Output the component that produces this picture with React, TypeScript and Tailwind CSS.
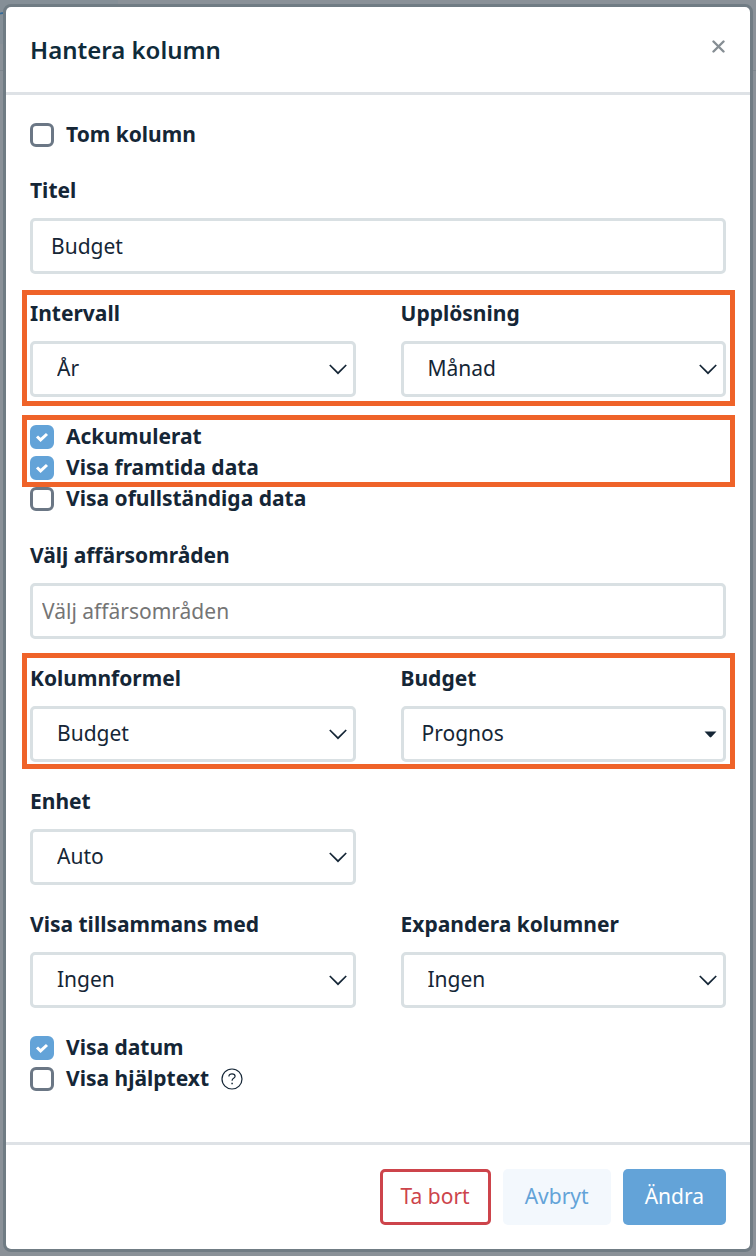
import { useState, type ReactNode } from 'react'
import clsx from 'clsx'

const CONTROL =
  'block w-full h-14 rounded-[5px] border-[3px] border-[#d9e0e3] bg-white text-[21px] text-[#152636] outline-none focus:border-[#63a3d8]'

export default function App() {
  return (
    <div className="relative min-h-screen bg-[#8a9198] px-[3px] pt-1 pb-1 font-['Noto_Sans',sans-serif] text-[#152636]">
      <Backdrop />
      <div
        role="dialog"
        aria-labelledby="dialog-title"
        className="relative rounded-lg border-[3px] border-[#707c84] bg-[#707c84]"
      >
        <div className="rounded-[5px] bg-white">
          <header className="flex h-[88px] items-center justify-between border-b-[3px] border-[#dee2e6] px-6">
            <h1 id="dialog-title" className="text-[24px] font-semibold text-[#0f2b3a]">
              Hantera kolumn
            </h1>
            <button type="button" aria-label="Stäng" className="mb-1.5 p-px text-[#868e94]">
              <svg width="13" height="13" viewBox="0 0 13 13" fill="none" stroke="currentColor" strokeWidth="2.4" strokeLinecap="round">
                <path d="M1.5 1.5 11.5 11.5M11.5 1.5 1.5 11.5" />
              </svg>
            </button>
          </header>

          <form className="flex flex-col gap-6 px-6 pt-6 pb-12" onSubmit={e => e.preventDefault()}>
            <div className="pb-px">
              <CheckRow label="Tom kolumn" />
            </div>

            <Field id="titel" label="Titel">
              <input id="titel" type="text" defaultValue="Budget" className={clsx(CONTROL, 'px-[18px]')} />
            </Field>

            <Row>
              <Highlight className="-top-2 -bottom-[9px]" />
              <SelectField id="intervall" label="Intervall" options={['År', 'Kvartal', 'Månad']} />
              <SelectField id="upplosning" label="Upplösning" options={['Månad', 'Kvartal', 'År']} />
            </Row>

            <div className="flex flex-col pb-0.5">
              <div className="relative flex flex-col">
                <Highlight className="-top-1.5 -bottom-1" />
                <CheckRow label="Ackumulerat" checked />
                <CheckRow label="Visa framtida data" checked />
              </div>
              <CheckRow label="Visa ofullständiga data" />
            </div>

            <Field id="affarsomraden" label="Välj affärsområden">
              <input
                id="affarsomraden"
                type="text"
                placeholder="Välj affärsområden"
                className={clsx(CONTROL, 'px-[9px] placeholder:text-[#757575]')}
              />
            </Field>

            <Row>
              <Highlight className="-top-2.5 -bottom-[7px]" />
              <SelectField id="kolumnformel" label="Kolumnformel" options={['Budget', 'Utfall']} />
              <SelectField id="budget" label="Budget" options={['Prognos', 'Budget']} caret />
            </Row>

            <Row>
              <SelectField id="enhet" label="Enhet" options={['Auto']} />
            </Row>

            <Row>
              <SelectField id="tillsammans" label="Visa tillsammans med" options={['Ingen']} />
              <SelectField id="expandera" label="Expandera kolumner" options={['Ingen']} />
            </Row>

            <div className="flex flex-col">
              <CheckRow label="Visa datum" checked />
              <div className="flex items-center gap-3">
                <CheckRow label="Visa hjälptext" />
                <button type="button" aria-label="Hjälp">
                  <HelpIcon />
                </button>
              </div>
            </div>
          </form>

          <footer className="flex justify-end gap-3 border-t-[3px] border-[#dee2e6] p-6">
            <button type="button" className="h-14 rounded-[5px] border-[3px] border-[#cd444b] px-[18px] text-[21px] text-[#cd444b]">
              Ta bort
            </button>
            <button type="button" className="h-14 rounded-[5px] bg-[#f3f8fd] px-[22px] text-[21px] text-[#63a3d8]">
              Avbryt
            </button>
            <button type="submit" className="h-14 rounded-[5px] bg-[#63a3d8] px-[22px] text-[21px] text-white">
              Ändra
            </button>
          </footer>
        </div>
      </div>
    </div>
  )
}

// The dimmed page behind the dialog, of which only the edges show.
function Backdrop() {
  return (
    <div aria-hidden="true" className="pointer-events-none absolute inset-x-0 top-0 h-[71px] border-b border-[#7d868d]">
      <div className="h-11 w-[118px] bg-[#858f97]">
        <svg width="6" height="24" viewBox="0 0 6 24" fill="none" stroke="#356a96" strokeWidth="1.8">
          <path d="M0 14C1 12.7 5 12.3 5 16.5V23" />
        </svg>
      </div>
    </div>
  )
}

function Row({ children }: { children: ReactNode }) {
  return <div className="relative grid grid-cols-2 gap-[45px]">{children}</div>
}

// Orange frame that calls out a group of settings, drawn over its parent.
function Highlight({ className }: { className: string }) {
  return (
    <div
      aria-hidden="true"
      className={clsx('pointer-events-none absolute -right-[9px] -left-2 z-10 border-[5px] border-[#ef6329]', className)}
    />
  )
}

function Field({ id, label, children }: { id: string; label: string; children: ReactNode }) {
  return (
    <div className="flex flex-col gap-3">
      <label htmlFor={id} className="text-[21px] leading-[31px] font-bold whitespace-nowrap">
        {label}
      </label>
      {children}
    </div>
  )
}

function SelectField({ id, label, options, caret }: { id: string; label: string; options: string[]; caret?: boolean }) {
  return (
    <Field id={id} label={label}>
      <div className="relative">
        <select id={id} className={clsx(CONTROL, 'appearance-none pr-10', caret ? 'pl-[18px]' : 'pl-6')}>
          {options.map(o => (
            <option key={o}>{o}</option>
          ))}
        </select>
        <div className="pointer-events-none absolute inset-y-0 right-[9px] flex items-center">
          {caret ? (
            <svg width="13" height="7" viewBox="0 0 13 7" fill="#152636">
              <path d="M.5.5h12l-5.2 5.6a1.1 1.1 0 0 1-1.6 0z" />
            </svg>
          ) : (
            <svg width="18" height="11" viewBox="0 0 18 11" fill="none" stroke="#152636" strokeWidth="1.7">
              <path d="M.8 1 9 9.2 17.2 1" />
            </svg>
          )}
        </div>
      </div>
    </Field>
  )
}

function CheckRow({ label, checked = false }: { label: string; checked?: boolean }) {
  const [on, setOn] = useState(checked)
  return (
    <label className="flex h-[31px] items-center gap-3 text-[21px] font-bold whitespace-nowrap">
      <span className="relative flex size-6">
        <input
          type="checkbox"
          checked={on}
          onChange={e => setOn(e.target.checked)}
          className="size-6 appearance-none rounded-[6px] border-[3px] border-[#6b7785] bg-white checked:border-[#63a3d8] checked:bg-[#63a3d8]"
        />
        {on && (
          <svg className="pointer-events-none absolute inset-0" width="24" height="24" viewBox="0 0 24 24" fill="none" stroke="white" strokeWidth="3">
            <path d="m7 11.5 3.6 3.4L17 9" />
          </svg>
        )}
      </span>
      {label}
    </label>
  )
}

function HelpIcon() {
  return (
    <svg width="22" height="22" viewBox="0 0 22 22" fill="none" stroke="#152636" strokeWidth="1.2">
      <circle cx="11" cy="11" r="10" />
      <path d="M7.9 8.4c0-1.6 1.3-2.5 3.1-2.5s3.1.9 3.1 2.3c0 2.1-3 1.9-3 4.2v.4" />
      <path d="M11.1 14.7v1.5" strokeWidth="1.5" />
    </svg>
  )
}
